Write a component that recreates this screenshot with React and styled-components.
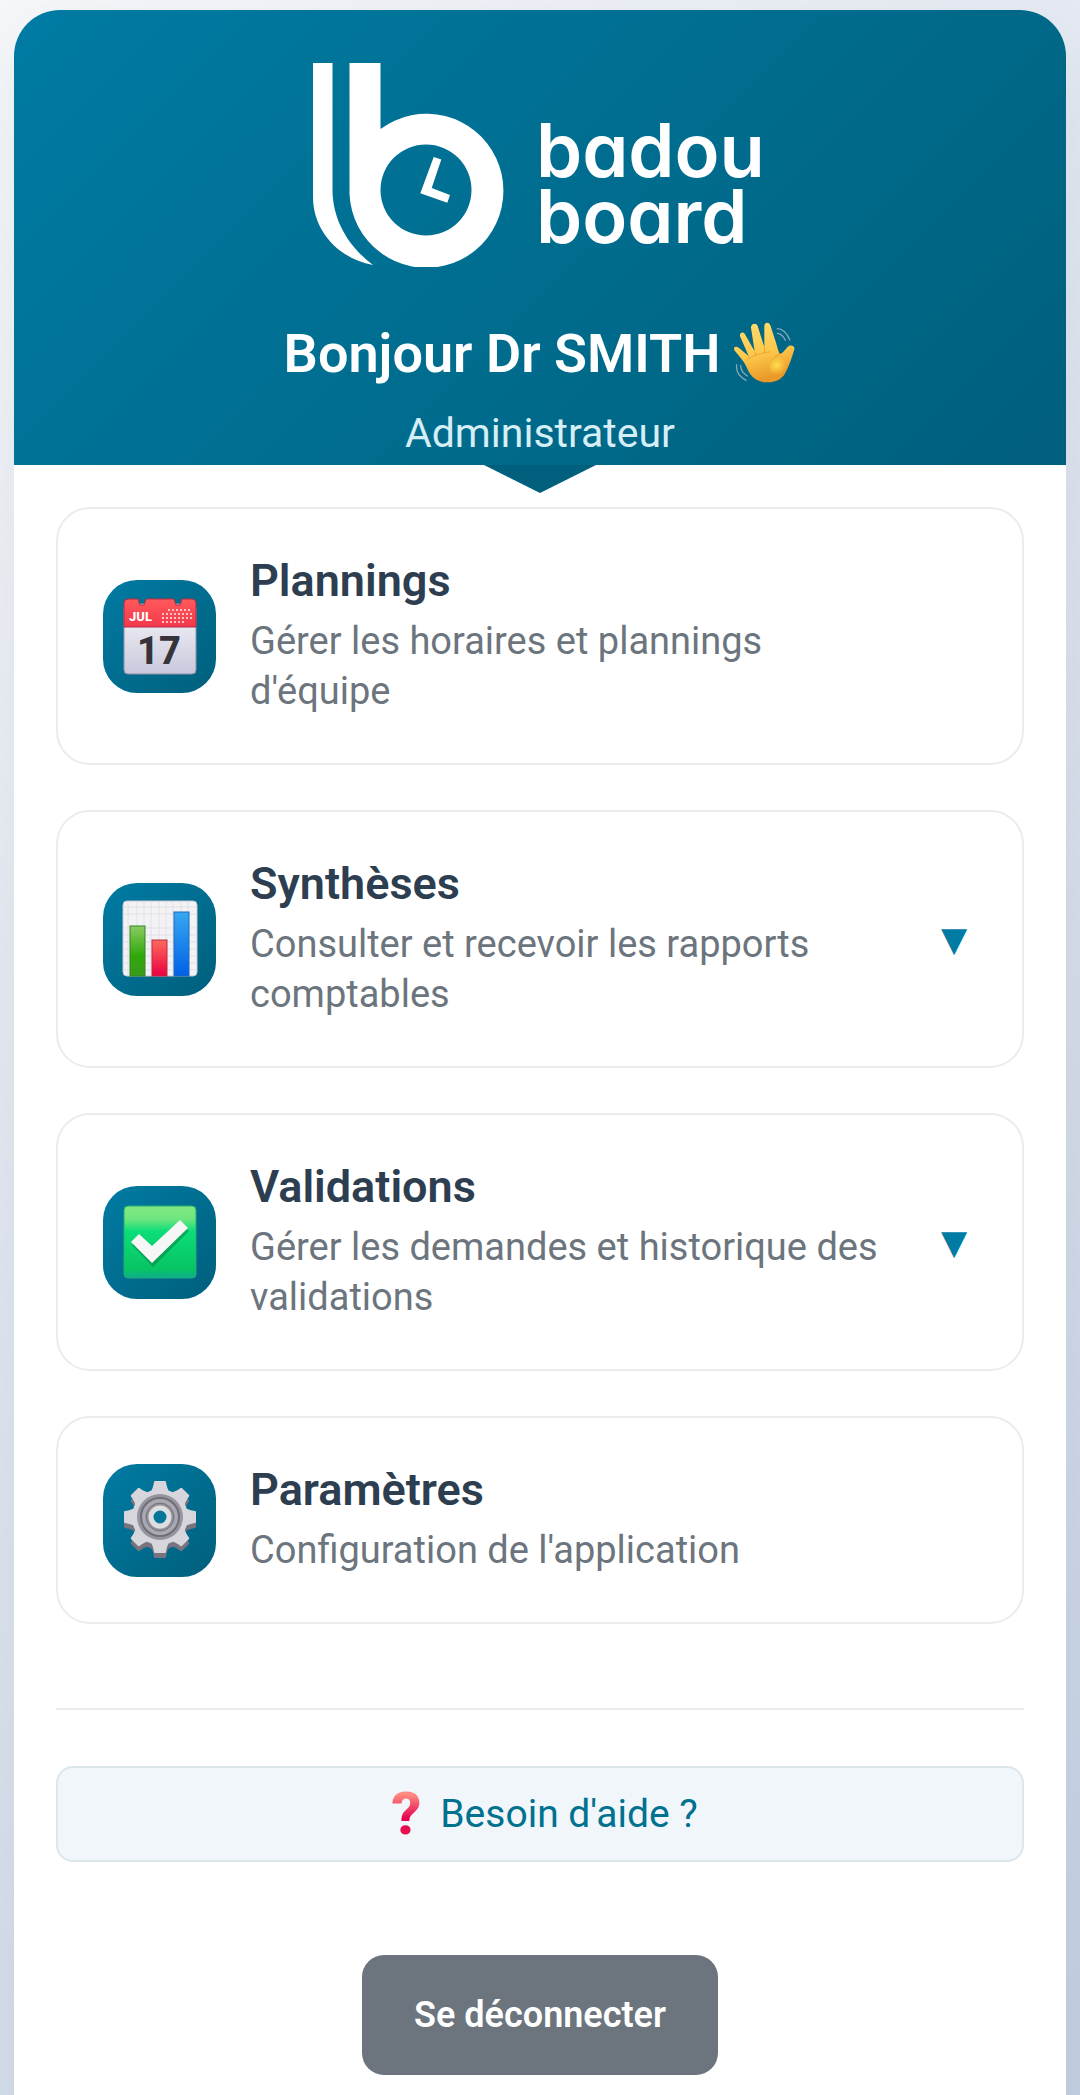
import React from 'react'
import styled, { createGlobalStyle } from 'styled-components'

const GlobalStyle = createGlobalStyle`
  * {
    box-sizing: border-box;
  }

  body {
    margin: 0;
    font-family: Roboto, "Liberation Sans", sans-serif;
    background: linear-gradient(135deg, #f5f7fa 0%, #c3cfe2 100%);
  }
`

const Page = styled.div`
  display: flex;
  min-height: 100vh;
  padding: 10px 14px 0;
`

const Panel = styled.main`
  flex: 1;
  display: flex;
  flex-direction: column;
  min-width: 0;
  background: #fff;
  border-radius: 46px 46px 0 0;
  box-shadow: 0 28px 84px rgba(0, 0, 0, 0.06);
`

const Header = styled.header`
  position: relative;
  display: flex;
  flex-direction: column;
  align-items: center;
  padding: 53px 42px 8px;
  color: #fff;
  background: linear-gradient(135deg, #007ba3 0%, #005f7c 100%);
  border-radius: 46px 46px 0 0;

  &::after {
    content: '';
    position: absolute;
    top: 100%;
    left: 50%;
    margin-left: -56px;
    border: 56px solid transparent;
    border-top: 28px solid #005f7c;
    border-bottom: 0;
  }
`

const Logo = styled.svg`
  display: block;
  width: 454px;
  height: 204px;
  fill: #fff;

  text {
    font: 600 74px Inter, sans-serif;
    font-feature-settings: 'cv11';
  }
`

const Greeting = styled.h1`
  display: flex;
  align-items: center;
  gap: 12px;
  margin: 53px 0 0;
  font-size: 54px;
  line-height: 68px;
  font-weight: 600;

  svg {
    width: 64px;
    height: 64px;
  }
`

const Role = styled.p`
  margin: 21px 0 0;
  font-size: 41px;
  line-height: 48px;
  color: #d6eef6;
`

const Content = styled.div`
  display: flex;
  flex-direction: column;
  padding: 42px 42px 20px;
`

const Menu = styled.nav`
  display: flex;
  flex-direction: column;
  gap: 45px;
`

const MenuCard = styled.button`
  display: flex;
  align-items: center;
  gap: 34px;
  width: 100%;
  padding: 45px;
  font-family: inherit;
  text-align: left;
  background: #fff;
  border: 2px solid #e9ecef;
  border-radius: 34px;
  cursor: pointer;
`

const IconTile = styled.span`
  flex: none;
  display: grid;
  place-items: center;
  width: 113px;
  height: 113px;
  border-radius: 34px;
  background: linear-gradient(135deg, #007ba3 0%, #005f7c 100%);

  svg {
    width: 76px;
    height: 80px;
  }
`

const CardText = styled.span`
  flex: 1;
  display: flex;
  flex-direction: column;
  gap: 8px;
  padding-bottom: 2px;
`

const CardTitle = styled.span`
  font-size: 45px;
  line-height: 54px;
  font-weight: 600;
  color: #2c3e50;
`

const CardDescription = styled.span`
  font-size: 38px;
  line-height: 50px;
  color: #6c757d;
`

const Chevron = styled.span`
  flex: none;
  width: 36px;
  font-family: "DejaVu Sans", sans-serif;
  font-size: 34px;
  line-height: 40px;
  color: #007ba3;
`

const Divider = styled.hr`
  width: 100%;
  height: 2px;
  margin: 84px 0 56px;
  border: 0;
  background: #e9ecef;
`

const HelpLink = styled.a`
  display: flex;
  align-items: center;
  justify-content: center;
  gap: 10px;
  padding: 22px;
  font-size: 39px;
  line-height: 48px;
  color: #00718f;
  text-decoration: none;
  background: #f0f6f9;
  border: 2px solid #dce7ec;
  border-radius: 17px;
`

const RedMark = styled.span`
  width: 48px;
  text-align: center;
  font-size: 60px;
  line-height: 48px;
  font-weight: 800;
  color: transparent;
  background: linear-gradient(#ff8a80 10%, #e5004f 60%, #e8174f 100%);
  background-clip: text;
`

const LogoutButton = styled.button`
  align-self: center;
  margin-top: 93px;
  padding: 36px 52px;
  font-family: inherit;
  font-size: 36px;
  line-height: 48px;
  font-weight: 600;
  color: #fff;
  background: #6c757d;
  border: 0;
  border-radius: 22px;
  cursor: pointer;
`

const BadouLogo = () => (
  <Logo viewBox="0 0 454 204" role="img" aria-label="badou board">
    <path d="M0 0H19.5V128C20 158 36 184 60 202C26 196 0 168 0 134Z" />
    <path
      fillRule="evenodd"
      d="M36.5 0H67.5V66A77 77 0 1 1 36.5 131ZM67.5 127A45.5 45.5 0 1 0 158.5 127A45.5 45.5 0 1 0 67.5 127Z"
    />
    <path d="M120.7 94L128.3 96.5L118.7 125L137 132L134.3 139.7L107.3 130.3Z" />
    <text>
      <tspan x="223" y="114">badou</tspan>
      <tspan x="223" y="180">board</tspan>
    </text>
  </Logo>
)

const WaveIcon = () => (
  <svg viewBox="24 24 192 192" aria-hidden="true">
    <defs>
      <linearGradient id="skin" x1="0" y1="0" x2="0.3" y2="1">
        <stop offset="0" stopColor="#ffdf72" />
        <stop offset="0.6" stopColor="#fdc74a" />
        <stop offset="1" stopColor="#eb9a2a" />
      </linearGradient>
      <radialGradient id="palm">
        <stop offset="0" stopColor="#ffe04f" />
        <stop offset="1" stopColor="#ffcb45" stopOpacity="0" />
      </radialGradient>
    </defs>
    <path
      fill="url(#skin)"
      d="M30 101C34 96 41 98 46 103L74 126L48 67C46 58 55 51 62 59L92 112L81 42C80 28 97 24 101 36L121 99L121 36C122 24 136 23 139 34L157 89C160 101 164 112 167 120C177 118 183 108 190 100C198 90 214 96 211 106C205 128 197 152 185 175C173 201 145 208 116 204C90 199 77 182 68 160C58 139 43 124 31 109Z"
    />
    <path d="M70 138C84 124 108 118 139 113M93 113L96 125M121 99L123 117M74 127L80 131" fill="none" stroke="#e19a2c" strokeWidth="3" opacity="0.7" />
    <path d="M135 182C126 153 145 132 165 122" fill="none" stroke="#e4a02f" strokeWidth="4" opacity="0.7" />
    <circle cx="158" cy="154" r="30" fill="url(#palm)" />
    <path
      fill="none"
      stroke="#86a6b5"
      strokeWidth="4"
      strokeLinecap="round"
      d="M160 44Q182 44 198 78M160 58Q174 58 184 79M38 152Q34 182 66 199M50 154Q50 174 70 186"
    />
  </svg>
)

const CalendarIcon = () => (
  <svg viewBox="0 0 76 80" aria-hidden="true">
    <defs>
      <linearGradient id="sheet" x1="0" y1="0" x2="0" y2="1">
        <stop offset="0" stopColor="#f7f7fa" />
        <stop offset="1" stopColor="#c9c8dc" />
      </linearGradient>
      <linearGradient id="binding" x1="0" y1="0" x2="0" y2="1">
        <stop offset="0" stopColor="#ff5a5c" />
        <stop offset="1" stopColor="#f2384b" />
      </linearGradient>
    </defs>
    <rect x="2" y="8" width="72" height="70" rx="4" fill="url(#sheet)" stroke="#9390a8" />
    <path d="M2 31V7Q2 3 6 3H16L18 9H22L24 3H52L54 9H58L60 3H70Q74 3 74 7V31Z" fill="url(#binding)" stroke="#b32b40" />
    <text x="7" y="25" fill="#fff" fontSize="13" fontWeight="800">JUL</text>
    <path d="M46 14H70M40 18H70M40 22H70M40 26H63" stroke="#ffc4c8" strokeWidth="2" strokeDasharray="2 2" />
    <text x="37" y="68" fill="#36343a" textAnchor="middle" fontSize="38" fontWeight="800">17</text>
  </svg>
)

const ChartIcon = () => (
  <svg viewBox="0 0 76 80" aria-hidden="true">
    <defs>
      <linearGradient id="greenBar" x1="0" y1="0" x2="0" y2="1">
        <stop offset="0" stopColor="#8acb62" />
        <stop offset="0.6" stopColor="#2fa80a" />
        <stop offset="1" stopColor="#3a9a1c" />
      </linearGradient>
      <linearGradient id="redBar" x1="0" y1="0" x2="0" y2="1">
        <stop offset="0" stopColor="#ff6a5e" />
        <stop offset="1" stopColor="#ea003f" />
      </linearGradient>
      <linearGradient id="blueBar" x1="0" y1="0" x2="0" y2="1">
        <stop offset="0" stopColor="#37a8f2" />
        <stop offset="1" stopColor="#0061e6" />
      </linearGradient>
    </defs>
    <rect x="1" y="2" width="74" height="75" rx="4" fill="#f3f3f6" stroke="#c4c6cf" />
    <path d="M6 2V77M15 2V77M22 2V77M29 2V77M37 2V77M44 2V77M51 2V77M59 2V77M66 2V77M1 8H75M1 15H75M1 29H75M1 36H75M1 43H75M1 50H75M1 57H75M1 64H75M1 71H75" stroke="#dfdfe6" />
    <rect x="8" y="27" width="15" height="50" fill="url(#greenBar)" stroke="#398226" />
    <rect x="30" y="41" width="15" height="36" fill="url(#redBar)" stroke="#bf2a46" />
    <rect x="52" y="13" width="15" height="64" fill="url(#blueBar)" stroke="#1c69bd" />
  </svg>
)

const CheckIcon = () => (
  <svg viewBox="0 0 76 80" aria-hidden="true">
    <defs>
      <linearGradient id="checkBox" x1="0" y1="0" x2="0" y2="1">
        <stop offset="0" stopColor="#83e783" />
        <stop offset="0.18" stopColor="#6fe67f" />
        <stop offset="0.35" stopColor="#0bdd78" />
        <stop offset="0.88" stopColor="#08c463" />
        <stop offset="1" stopColor="#0eae91" />
      </linearGradient>
    </defs>
    <rect x="2" y="4" width="72" height="72" rx="4" fill="url(#checkBox)" stroke="#1fae78" />
    <path d="M10 41L18 33L31 45L58 19L67 27L31 63Z" transform="translate(0 2)" fill="#06894a" opacity="0.6" />
    <path d="M9 40L17 32L30 44L58 18L66 26L30 61Z" fill="#f6f6f6" />
  </svg>
)

// eight teeth around a disc, drawn twice for the bevel
const TEETH = [0, 45, 90, 135, 180, 225, 270, 315]

const GearShape = ({ fill, y }) => (
  <g fill={fill} transform={`translate(38 ${y})`}>
    <circle r="28" />
    {TEETH.map((angle) => (
      <path key={angle} d="M-10 -24Q-7 -28 -6 -35Q-6 -36 -5 -36H5Q6 -36 6 -35Q7 -28 10 -24Z" transform={`rotate(${angle})`} />
    ))}
  </g>
)

const GearIcon = () => (
  <svg viewBox="0 0 76 80" aria-hidden="true">
    <GearShape fill="#77737f" y={42} />
    <GearShape fill="#d7d6dc" y={37} />
    <circle cx="38" cy="37" r="23" fill="#96949f" />
    <circle cx="38" cy="37" r="19" fill="#aaa8b1" stroke="#706e79" strokeWidth="2" />
    <circle cx="38" cy="37" r="14" fill="#92909b" stroke="#74727d" />
    <circle cx="38" cy="37" r="9" fill="#03769a" stroke="#dedde2" strokeWidth="5" />
  </svg>
)

const items = [
  { title: 'Plannings', description: "Gérer les horaires et plannings d'équipe", icon: CalendarIcon },
  { title: 'Synthèses', description: 'Consulter et recevoir les rapports comptables', icon: ChartIcon, expandable: true },
  { title: 'Validations', description: 'Gérer les demandes et historique des validations', icon: CheckIcon, expandable: true },
  { title: 'Paramètres', description: "Configuration de l'application", icon: GearIcon },
]

const App = () => (
  <>
    <GlobalStyle />
    <Page>
      <Panel>
        <Header>
          <BadouLogo />
          <Greeting>
            Bonjour Dr SMITH
            <WaveIcon />
          </Greeting>
          <Role>Administrateur</Role>
        </Header>

        <Content>
          <Menu>
            {items.map(({ title, description, icon: Icon, expandable }) => (
              <MenuCard key={title} type="button" aria-expanded={expandable ? false : undefined}>
                <IconTile>
                  <Icon />
                </IconTile>
                <CardText>
                  <CardTitle>{title}</CardTitle>
                  <CardDescription>{description}</CardDescription>
                </CardText>
                <Chevron>{expandable && '▼'}</Chevron>
              </MenuCard>
            ))}
          </Menu>

          <Divider />

          <HelpLink href="#aide">
            <RedMark aria-hidden="true">?</RedMark>
            Besoin d'aide ?
          </HelpLink>

          <LogoutButton type="button">Se déconnecter</LogoutButton>
        </Content>
      </Panel>
    </Page>
  </>
)

export default App
